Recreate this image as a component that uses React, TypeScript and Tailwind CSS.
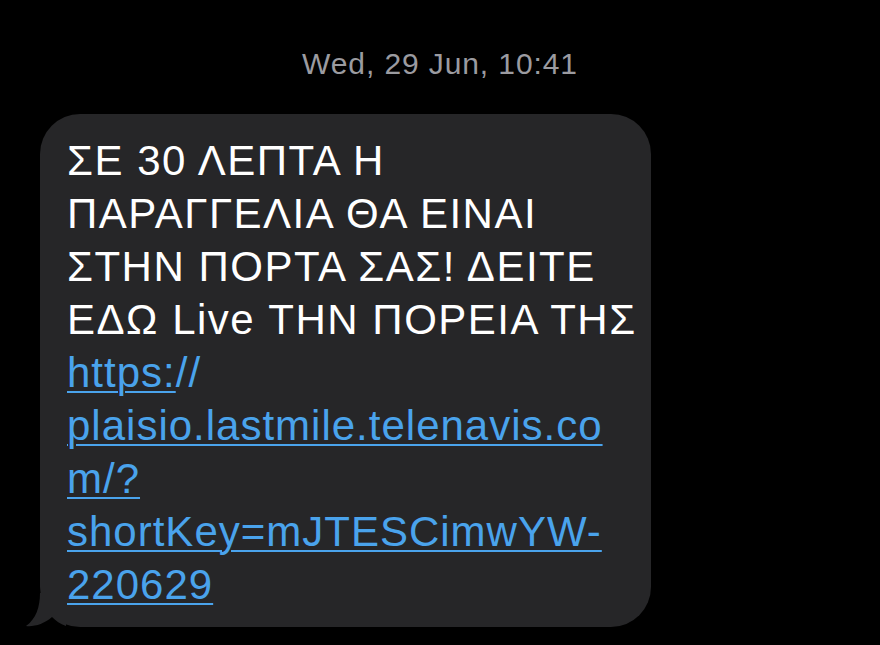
const font = { fontFamily: '"Liberation Sans", Arial, sans-serif' }

const BubbleTail = () => (
  <svg
    className="absolute bottom-0 left-[-14px]"
    width="40"
    height="34"
    viewBox="0 0 40 34"
    fill="#262628"
  >
    <path d="M14 0 C14 14 10 26 0 33 C8 34 18 31 26 24 C30 28 34 31 40 33 L40 0 Z" />
  </svg>
)

export default function App() {
  return (
    <div className="h-[645px] w-[880px] overflow-hidden bg-black" style={font}>
      <div className="flex justify-center pt-[46px]">
        <span className="text-[30px] leading-[36px] tracking-[0.9px] text-[#9b9ba0]">Wed, 29 Jun, 10:41</span>
      </div>

      <div className="relative ml-[40px] mt-[32px] h-[513px] w-[611px] rounded-[40px] bg-[#262628] pl-[27px] pt-[20px]">
        <BubbleTail />
        <p className="relative text-[42px] leading-[53px] text-white">
          <span className="tracking-[1.5px]">
            ΣΕ 30 ΛΕΠΤΑ Η
            <br />
            ΠΑΡΑΓΓΕΛΙΑ ΘΑ ΕΙΝΑΙ
            <br />
            ΣΤΗΝ ΠΟΡΤΑ ΣΑΣ! ΔΕΙΤΕ
            <br />
            ΕΔΩ Live ΤΗΝ ΠΟΡΕΙΑ ΤΗΣ
          </span>
          <br />
          <span className="tracking-[1px] text-[#4aa3ec]">
            <span className="underline decoration-2 underline-offset-4">https:</span>//
            <br />
            <span className="underline decoration-2 underline-offset-4">plaisio.lastmile.telenavis.co</span>
            <br />
            <span className="underline decoration-2 underline-offset-4">m/?</span>
            <br />
            <span className="underline decoration-2 underline-offset-4">shortKey=mJTESCimwYW-</span>
            <br />
            <span className="underline decoration-2 underline-offset-4">220629</span>
          </span>
        </p>
      </div>
    </div>
  )
}
